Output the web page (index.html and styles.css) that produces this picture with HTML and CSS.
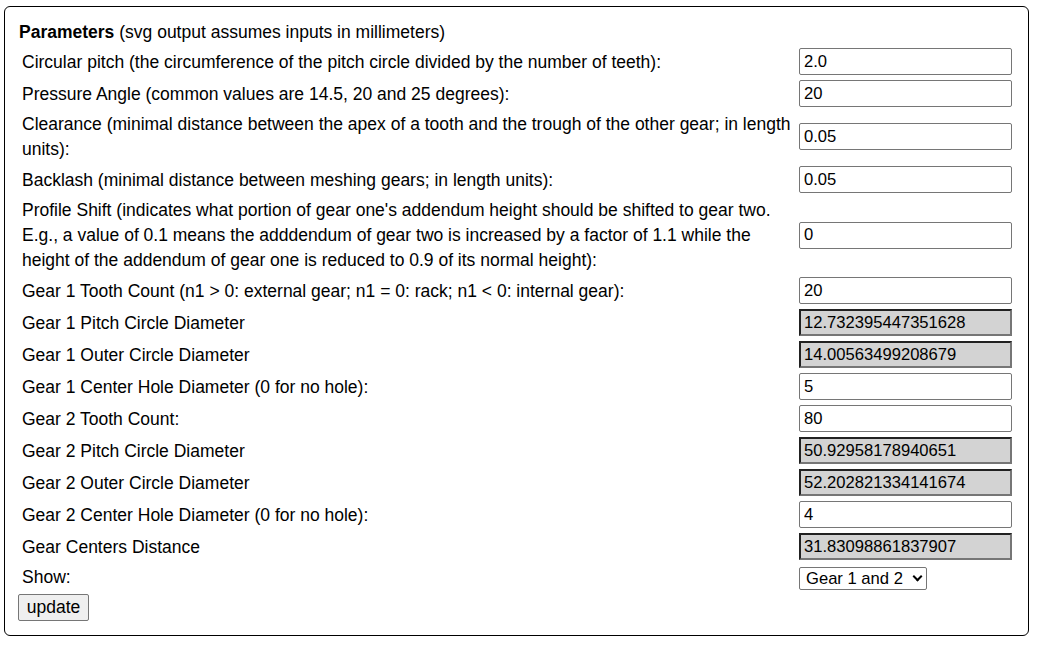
FILE: index.html
```html
<!DOCTYPE html>
<html>
<head>
<meta charset="utf-8">
<title>Gear parameters</title>
<link rel="stylesheet" href="styles.css">
</head>
<body>
<div class="panel">
  <div class="title"><b>Parameters</b> (svg output assumes inputs in millimeters)</div>
  <table class="params">
    <tr><td class="label">Circular pitch (the circumference of the pitch circle divided by the number of teeth):</td><td class="field"><input type="text" value="2.0"></td></tr>
    <tr><td class="label">Pressure Angle (common values are 14.5, 20 and 25 degrees):</td><td class="field"><input type="text" value="20"></td></tr>
    <tr><td class="label">Clearance (minimal distance between the apex of a tooth and the trough of the other gear; in length units):</td><td class="field"><input type="text" value="0.05"></td></tr>
    <tr><td class="label">Backlash (minimal distance between meshing gears; in length units):</td><td class="field"><input type="text" value="0.05"></td></tr>
    <tr><td class="label">Profile Shift (indicates what portion of gear one's addendum height should be shifted to gear two. E.g., a value of 0.1 means the adddendum of gear two is increased by a factor of 1.1 while the height of the addendum of gear one is reduced to 0.9 of its normal height):</td><td class="field"><input type="text" value="0"></td></tr>
    <tr><td class="label">Gear 1 Tooth Count (n1 &gt; 0: external gear; n1 = 0: rack; n1 &lt; 0: internal gear):</td><td class="field"><input type="text" value="20"></td></tr>
    <tr><td class="label">Gear 1 Pitch Circle Diameter</td><td class="field"><input type="text" class="ro" value="12.732395447351628" readonly></td></tr>
    <tr><td class="label">Gear 1 Outer Circle Diameter</td><td class="field"><input type="text" class="ro" value="14.00563499208679" readonly></td></tr>
    <tr><td class="label">Gear 1 Center Hole Diameter (0 for no hole):</td><td class="field"><input type="text" value="5"></td></tr>
    <tr><td class="label">Gear 2 Tooth Count:</td><td class="field"><input type="text" value="80"></td></tr>
    <tr><td class="label">Gear 2 Pitch Circle Diameter</td><td class="field"><input type="text" class="ro" value="50.92958178940651" readonly></td></tr>
    <tr><td class="label">Gear 2 Outer Circle Diameter</td><td class="field"><input type="text" class="ro" value="52.202821334141674" readonly></td></tr>
    <tr><td class="label">Gear 2 Center Hole Diameter (0 for no hole):</td><td class="field"><input type="text" value="4"></td></tr>
    <tr><td class="label">Gear Centers Distance</td><td class="field"><input type="text" class="ro" value="31.83098861837907" readonly></td></tr>
    <tr><td class="label">Show:</td><td class="field sel"><span class="select-wrap"><select><option>Gear 1 and 2</option><option>Gear 1</option><option>Gear 2</option></select></span></td></tr>
  </table>
  <button type="button" class="update">update</button>
</div>
</body>
</html>
```

FILE: styles.css
```css
html, body {
  margin: 0;
  padding: 0;
  background: #fff;
}
body {
  font-family: "Liberation Sans", Arial, sans-serif;
  font-size: 17.5px;
  line-height: 25px;
  color: #000;
}
.panel {
  margin: 6px 23px 0 4px;
  border: 1px solid #000;
  border-radius: 6px;
  padding: 13px 13px 14px 14px;
  width: 996px;
}
.title {
  line-height: 25px;
}
.params {
  width: 100%;
  border-collapse: separate;
  border-spacing: 2px;
}
.params td {
  padding: 1px;
  vertical-align: middle;
}
.params td.field {
  width: 213px;
  padding: 1px 1px 2px 1px;
}
.params td.sel {
  padding: 1px;
}
.params input {
  display: block;
  box-sizing: border-box;
  width: 213px;
  height: 27px;
  margin: 0;
  font-family: "Liberation Sans", Arial, sans-serif;
  font-size: 16.6px;
  color: #000;
  padding: 1px 4px;
  border: 1px solid #767676;
  border-radius: 2px;
  background: #fff;
}
.params input.ro {
  background: #d3d3d3;
  border: 2px inset #767676;
  border-radius: 0;
  padding: 1px 3px;
}
.select-wrap {
  position: relative;
  display: inline-block;
  vertical-align: middle;
}
.select-wrap::after {
  content: "";
  position: absolute;
  left: 115px;
  top: 6px;
  width: 5px;
  height: 5px;
  border-right: 2px solid #000;
  border-bottom: 2px solid #000;
  transform: rotate(45deg);
  pointer-events: none;
}
.params select {
  display: block;
  box-sizing: border-box;
  -webkit-appearance: none;
  appearance: none;
  height: 23px;
  width: 128px;
  padding: 0 0 0 6px;
  font-family: "Liberation Sans", Arial, sans-serif;
  font-size: 16.6px;
  line-height: 21px;
  color: #000;
  border: 1px solid #767676;
  border-radius: 2px;
  background: #fff;
}
.update {
  display: block;
  box-sizing: border-box;
  margin: 1px 0 0 -1px;
  width: 71px;
  height: 27px;
  padding: 0 6px;
  font-family: "Liberation Sans", Arial, sans-serif;
  font-size: 17.5px;
  color: #000;
  background: #efefef;
  border: 1px solid #767676;
  border-radius: 2px;
}
```
